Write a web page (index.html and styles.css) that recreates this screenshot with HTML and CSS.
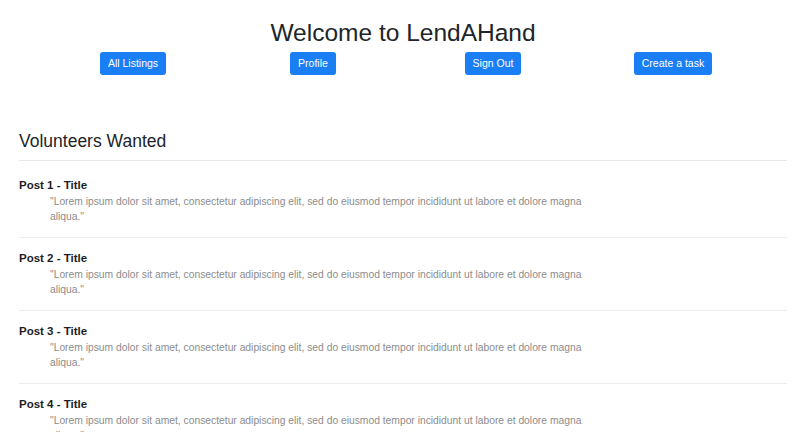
FILE: index.html
```html
<!DOCTYPE html>
<html lang="en">
<head>
    <meta charset="UTF-8">
    <meta name="viewport" content="width=device-width, initial-scale=1.0">
    <title>LendAHand</title>
    <link rel="stylesheet" href="styles.css">
</head>
<body>
    <header class="top">
        <h1 class="site-title">Welcome to LendAHand</h1>
        <nav class="nav-row">
            <div class="nav-cell"><a class="btn" href="#listings">All Listings</a></div>
            <div class="nav-cell"><a class="btn" href="#profile">Profile</a></div>
            <div class="nav-cell"><a class="btn" href="#signout">Sign Out</a></div>
            <div class="nav-cell"><a class="btn" href="#create">Create a task</a></div>
        </nav>
    </header>
    <main class="listings">
        <h2 class="section-title">Volunteers Wanted</h2>
        <ul class="posts">
            <li class="post">
                <h3 class="post-title">Post 1 - Title</h3>
                <p class="post-desc">"Lorem ipsum dolor sit amet, consectetur adipiscing elit, sed do eiusmod tempor incididunt ut labore et dolore magna aliqua."</p>
            </li>
            <li class="post">
                <h3 class="post-title">Post 2 - Title</h3>
                <p class="post-desc">"Lorem ipsum dolor sit amet, consectetur adipiscing elit, sed do eiusmod tempor incididunt ut labore et dolore magna aliqua."</p>
            </li>
            <li class="post">
                <h3 class="post-title">Post 3 - Title</h3>
                <p class="post-desc">"Lorem ipsum dolor sit amet, consectetur adipiscing elit, sed do eiusmod tempor incididunt ut labore et dolore magna aliqua."</p>
            </li>
            <li class="post">
                <h3 class="post-title">Post 4 - Title</h3>
                <p class="post-desc">"Lorem ipsum dolor sit amet, consectetur adipiscing elit, sed do eiusmod tempor incididunt ut labore et dolore magna aliqua."</p>
            </li>
        </ul>
    </main>
</body>
</html>
```

FILE: styles.css
```css
body {
    font-family: "Liberation Sans", Arial, sans-serif;
    color: #212529;
    margin: 0;
    padding: 0;
    background: #fff;
}

.site-title {
    font-size: 24.5px;
    font-weight: 400;
    line-height: 1.2;
    text-align: center;
    margin: 18px 0 5px;
}

.nav-row {
    width: 720px;
    margin: 0 auto;
    display: grid;
    grid-template-columns: repeat(4, 1fr);
    justify-items: center;
}

.btn {
    display: inline-block;
    font-size: 10.5px;
    line-height: 15px;
    padding: 4px 8px;
    color: #fff;
    background-color: #1a7ef5;
    border-radius: 3px;
    text-decoration: none;
}

.listings {
    padding: 0 19px;
}

.section-title {
    font-size: 17.5px;
    font-weight: 400;
    line-height: 1.2;
    margin: 56px 0 0;
    padding-bottom: 8px;
    border-bottom: 1px solid #e6e6e6;
}

.posts {
    list-style-type: none;
    margin: 4px 0 0;
    padding: 0;
}

.post {
    padding: 12px 0 13px;
    border-bottom: 1px solid #ececec;
}

.post-title {
    font-size: 11.5px;
    font-weight: 700;
    line-height: 16px;
    margin: 0;
    color: #1d1d1f;
}

.post-desc {
    font-size: 10.3px;
    line-height: 15px;
    color: #8c8c8c;
    max-width: 560px;
    margin: 1px 0 0 31px;
}
```
